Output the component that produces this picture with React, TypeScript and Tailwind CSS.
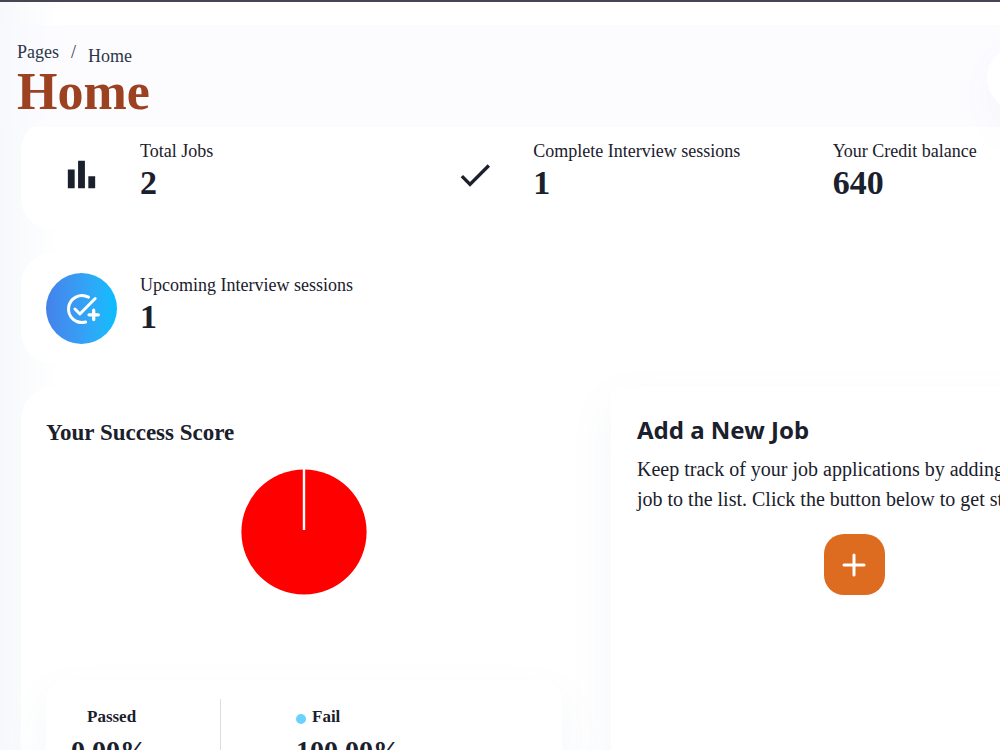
import React from 'react';
import { MdCheck } from 'react-icons/md';

interface StatCardProps {
  label: string;
  value: string;
  icon?: React.ReactNode;
}

interface ScoreItemProps {
  label: string;
  value: string;
  dotClass: string;
}

const BarChartIcon = () => (
  <svg viewBox="0 0 24 24" fill="currentColor" className="w-[41px] h-[41px]" aria-hidden="true">
    <path d="M4 9h4v11H4zM10 4h4v16h-4zM16 13h4v7h-4z" />
  </svg>
);

const AddTaskIcon = () => (
  <svg
    viewBox="0 0 24 24"
    className="h-9 w-9 overflow-visible"
    fill="none"
    stroke="currentColor"
    strokeWidth="2"
    strokeLinecap="round"
    strokeLinejoin="round"
    aria-hidden="true"
  >
    <path d="M16.3 4.1A9 9 0 1 0 14.4 20.7" />
    <path d="M7.3 12l3.3 3.3L20.8 5" />
    <path d="M19.8 12.8v6.2M16.7 15.9h6.2" strokeWidth="2.2" />
  </svg>
);

const PlusIcon = () => (
  <svg viewBox="0 0 24 24" className="h-6 w-6" aria-hidden="true">
    <path d="M12 2v20M2 12h20" fill="none" stroke="currentColor" strokeWidth="3" strokeLinecap="round" />
  </svg>
);

const StatCard: React.FC<StatCardProps> = ({ label, value, icon }) => {
  return (
    <div className="flex items-start rounded-[32px] bg-white px-[25px] py-5">
      {icon && (
        <div className="mr-[23px] flex h-[71px] w-[71px] shrink-0 items-center justify-center">
          {icon}
        </div>
      )}
      <div>
        <p className="text-[18px] leading-6">{label}</p>
        <p className="text-[34px] leading-10 font-bold">{value}</p>
      </div>
    </div>
  );
};

const ScoreItem: React.FC<ScoreItemProps> = ({ label, value, dotClass }) => {
  return (
    <div className="pt-2">
      <div className="flex items-center gap-[6px]">
        <span className={`mt-1 h-[10px] w-[10px] rounded-full ${dotClass}`} />
        <span className="text-[17px] leading-5 font-bold">{label}</span>
      </div>
      <p className="mt-2 text-[28px] leading-8 font-bold">{value}</p>
    </div>
  );
};

const PieChart = () => (
  <svg viewBox="0 0 126 126" className="mx-auto mt-[22px] block w-[126px]" role="img" aria-label="Success score">
    <circle cx="63" cy="63" r="62.6" fill="#ff0000" />
    <path d="M63 0v61" stroke="#ffffff" strokeWidth="2.4" />
  </svg>
);

const App: React.FC = () => {
  return (
    <div className="h-screen overflow-hidden border-t-2 border-[#454553] bg-[linear-gradient(to_right,#f6f8fb,#ffffff_60px)] font-[Georgia,'Liberation_Serif',serif] text-[#1a202c]">
      <header className="relative z-10 mt-[23px] flex h-[102px] items-center justify-between bg-[#f9f9ff]/50 pt-1 pl-[17px]">
        <div>
          <nav aria-label="Breadcrumb" className="flex gap-3 text-[18px] leading-6 text-[#2d3748]">
            <a href="#">Pages</a>
            <span>/</span>
            <a href="#" className="mt-1">Home</a>
          </nav>
          <h1 className="text-[52px] leading-[48px] font-bold text-[#9c4221]">Home</h1>
        </div>
        <div className="-mr-[100px] h-[66px] w-[113px] shrink-0 rounded-full bg-white shadow-[14px_17px_40px_4px_rgba(112,144,176,0.08)]" />
      </header>

      <main className="-mt-2 ml-[21px] min-w-[1156px]">
        <div className="grid grid-cols-3 gap-x-6 gap-y-[23px]">
          <StatCard label="Total Jobs" value="2" icon={<BarChartIcon />} />
          <StatCard
            label="Complete Interview sessions"
            value="1"
            icon={<MdCheck className="h-10 w-10" />}
          />
          <StatCard label="Your Credit balance" value="640" />
          <StatCard
            label="Upcoming Interview sessions"
            value="1"
            icon={
              <div className="flex h-full w-full items-center justify-center rounded-full bg-linear-to-r from-[#4481eb] to-[#04befe] text-white">
                <AddTaskIcon />
              </div>
            }
          />
        </div>

        <div className="mt-[23px] grid grid-cols-2 gap-6">
          <section className="rounded-[32px] bg-white px-[25px] pt-8">
            <h2 className="text-[23px] leading-7 font-bold">Your Success Score</h2>
            <PieChart />
            <div className="mt-[85px] flex rounded-[20px] bg-white px-[25px] py-[19px] shadow-[0px_18px_40px_rgba(112,144,176,0.08)]">
              <div className="w-[150px] border-r border-gray-300/80">
                <ScoreItem label="Passed" value="0.00%" dotClass="bg-white" />
              </div>
              <div className="pl-[75px]">
                <ScoreItem label="Fail" value="100.00%" dotClass="bg-[#6ad2ff]" />
              </div>
            </div>
          </section>

          <section className="bg-white px-[26px] pt-[27px] shadow-[0px_18px_40px_rgba(112,144,176,0.08)]">
            <h2 className="font-['Noto_Sans',sans-serif] text-2xl leading-8 font-bold">Add a New Job</h2>
            <div className="mt-2 flex w-fit min-w-[434px] flex-col items-center">
              <p className="w-full text-[20px] leading-[30px] whitespace-nowrap">
                Keep track of your job applications by adding a new
                <br />
                job to the list. Click the button below to get started.
              </p>
              <button
                type="button"
                aria-label="Add a new job"
                className="mt-5 flex h-[61px] w-[61px] items-center justify-center rounded-[20px] bg-[#dd6b20] text-white"
              >
                <PlusIcon />
              </button>
            </div>
          </section>
        </div>
      </main>
    </div>
  );
};

export default App;
